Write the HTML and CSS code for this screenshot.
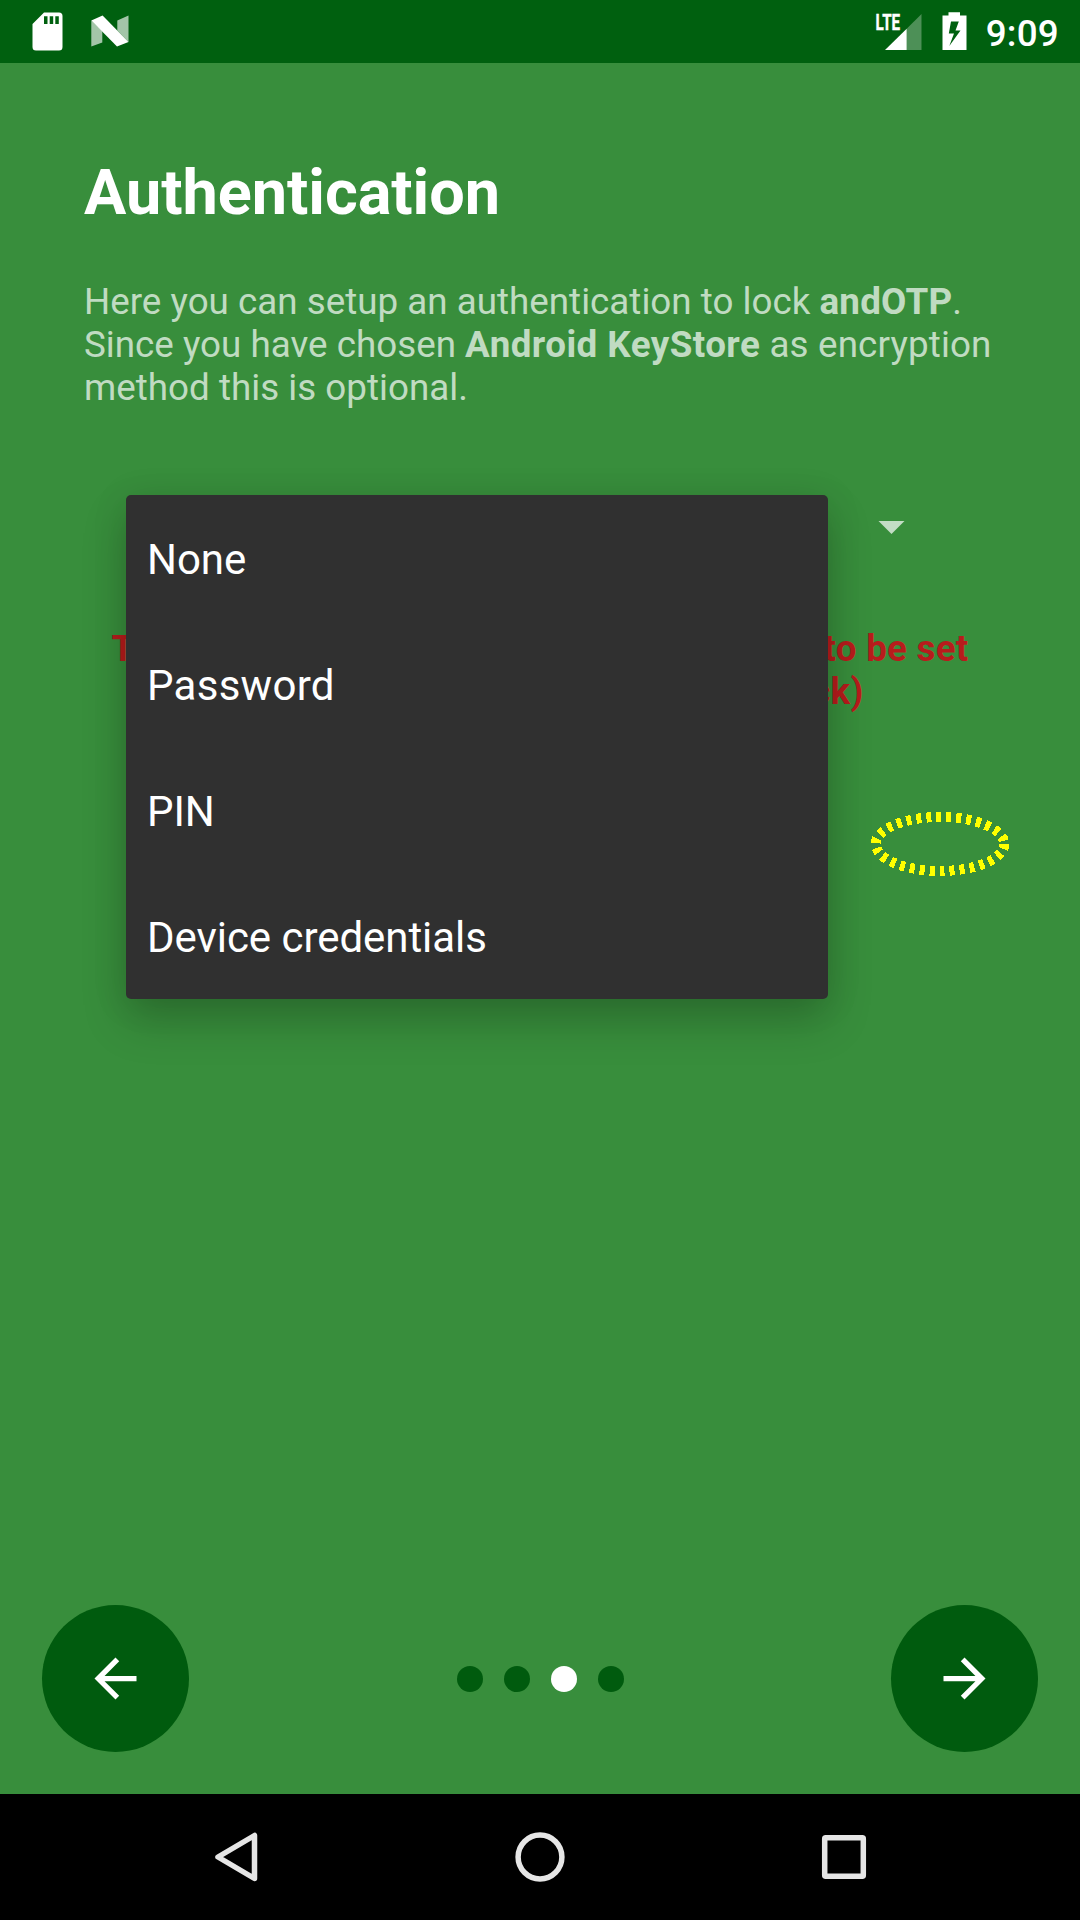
FILE: index.html
```html
<!DOCTYPE html>
<html lang="en">
<head>
<meta charset="utf-8">
<title>andOTP - Authentication</title>
<link rel="stylesheet" href="styles.css">
</head>
<body>
<header class="status-bar">
  <svg class="sd-icon" width="31" height="39" viewBox="0 0 31 39"><path fill="#fff" fill-rule="evenodd" d="M12 .5H27a3.500 3.500 0 0 1 3.500 3.500V35a3.500 3.500 0 0 1-3.500 3.500H4A3.500 3.500 0 0 1 .5 35V12ZM12 4.300v7.700h3.500V4.300ZM17.700 4.300v7.700h3.500V4.300ZM23.300 4.300v7.700h3.500V4.300Z"/></svg>
  <svg class="n-icon" width="38" height="32" viewBox="0 0 38 32"><path fill="#fff" fill-opacity=".64" d="M.3 5.500 11.300 16V27.500L.3 31.500ZM26.300 5.500 37.500.5V27L26.300 15.500Z"/><path fill="#fff" d="M.3 5.500 11.600.5 37.500 27 26 31.500Z"/></svg>
  <span class="spacer"></span>
  <svg class="signal-icon" width="47" height="40" viewBox="0 0 47 40"><path fill="#fff" fill-opacity=".3" d="M31.700 16.800 46.500 2V38H31.700Z"/><path fill="#fff" d="M10 38 31.700 16.800V38Z"/><text class="lte" x="0.600" y="17.500" textLength="24.500" lengthAdjust="spacingAndGlyphs">LTE</text></svg>
  <svg class="battery-icon" width="25" height="39" viewBox="0 0 25 39"><path fill="#fff" fill-rule="evenodd" d="M6.500 .3H18V3.500H24.500V38H.5V3.500H6.500ZM9 9.500 6.800 21.500H12L7.300 34 18.500 18.500H13.500L16.800 9.500Z"/></svg>
  <span class="clock">9:09</span>
</header>
<main class="slide">
  <h1 class="title">Authentication</h1>
  <p class="description">Here you can setup an authentication to lock <b>andOTP</b>.<br>Since you have chosen <b class="method">Android KeyStore</b><span class="line-end"> as encryption</span><br>method this is optional.</p>
  <div class="spinner">
    <svg class="caret" width="26" height="13" viewBox="0 0 26 13"><path fill="#fff" fill-opacity=".7" d="M.5 0H26.500L13.500 13Z"/></svg>
    <ul class="menu">
      <li class="option">None</li>
      <li class="option wide">Password</li>
      <li class="option">PIN</li>
      <li class="option">Device credentials</li>
    </ul>
  </div>
  <p class="warning">This feature requires a secure lock screen to be set<br>up (Settings -&gt; Security -&gt; Screenlock)</p>
  <svg class="highlight" width="140" height="66" viewBox="0 0 140 66"><ellipse cx="70" cy="33" rx="64.300" ry="27" fill="none" stroke="#ff0" stroke-width="10" stroke-dasharray="5 5" shape-rendering="crispEdges"/></svg>
  <footer class="controls">
    <button class="round" aria-label="Back"><svg width="63" height="63" viewBox="0 0 24 24"><path fill="#fff" d="M20 11H7.830l5.590-5.590L12 4l-8 8 8 8 1.410-1.410L7.830 13H20v-2z"/></svg></button>
    <div class="dots"><i class="dot"></i><i class="dot"></i><i class="dot active"></i><i class="dot"></i></div>
    <button class="round" aria-label="Next"><svg width="63" height="63" viewBox="0 0 24 24"><path fill="#fff" d="M12 4l-1.410 1.410L16.170 11H4v2h12.170l-5.580 5.590L12 20l8-8z"/></svg></button>
  </footer>
</main>
<nav class="nav-bar">
  <svg width="54" height="54" viewBox="0 0 54 54"><path d="M41.500 5.500V48.500L5 27Z"/></svg>
  <svg width="54" height="54" viewBox="0 0 54 54"><circle cx="27" cy="27" r="21.900"/></svg>
  <svg width="54" height="54" viewBox="0 0 54 54"><rect x="11.700" y="7.700" width="38.600" height="38.600" rx="1"/></svg>
</nav>
</body>
</html>
```
FILE: styles.css
```css
* { box-sizing: border-box; }

body {
  margin: 0;
  width: 1080px;
  height: 1920px;
  display: flex;
  flex-direction: column;
  overflow: hidden;
  background: #388e3c;
  color: #fff;
  font-family: Roboto, sans-serif;
}

svg { display: block; flex: none; overflow: visible; }

.status-bar {
  height: 63px;
  display: flex;
  align-items: flex-start;
  padding: 12px 21px 0 32px;
  background: #00600f;
}
.n-icon { margin: 3px 0 0 28px; }
.spacer { flex: 1; }
.signal-icon { margin-right: 20px; }
.lte {
  font-size: 22.500px;
  font-weight: 700;
  fill: #fff;
  stroke: #fff;
  stroke-width: .4;
}
.clock {
  margin: 0 0 0 19px;
  font-size: 36.750px;
  font-weight: 500;
  line-height: 43px;
  letter-spacing: .25px;
}

.slide {
  position: relative;
  flex: 1;
  display: flex;
  flex-direction: column;
  padding: 93px 42px 42px;
}
.title {
  margin: 0 42px;
  font-size: 63px;
  font-weight: 700;
  line-height: 74px;
  letter-spacing: -.04px;
}
.description {
  margin: 50px 42px 0;
  font-size: 36.750px;
  line-height: 43px;
  letter-spacing: .015px;
  color: rgba(255, 255, 255, .7);
  white-space: nowrap;
}
.description b { letter-spacing: .2px; }
.description .method { letter-spacing: .45px; }
.line-end { letter-spacing: .15px; }
.spinner {
  position: relative;
  height: 126px;
  margin: 54px 84px 0;
  padding: 58px 50px 0 0;
  display: flex;
  justify-content: flex-end;
}
.menu {
  position: absolute;
  z-index: 2;
  left: 0;
  top: 32px;
  width: 702px;
  margin: 0;
  padding: 0;
  list-style: none;
  background: #303030;
  border-radius: 5px;
  box-shadow: 0 22px 46px rgba(0, 0, 0, .2), 0 4px 36px rgba(0, 0, 0, .1);
}
.option {
  height: 126px;
  padding-left: 21px;
  font-size: 42px;
  line-height: 129px;
  letter-spacing: -.05px;
}
.option.wide { letter-spacing: .28px; }
.warning {
  margin: 38px 0 0;
  text-align: center;
  font-size: 36.750px;
  font-weight: 700;
  line-height: 43px;
  letter-spacing: .24px;
  color: #b71c1c;
  white-space: nowrap;
}
.highlight {
  position: absolute;
  left: 870px;
  top: 748px;
}
.controls {
  margin-top: auto;
  display: flex;
  align-items: center;
  justify-content: space-between;
}
.round {
  width: 147px;
  height: 147px;
  display: flex;
  align-items: center;
  justify-content: center;
  border: 0;
  padding: 0;
  border-radius: 50%;
  background: #005b0e;
}
.dots { display: flex; gap: 21px; }
.dot {
  width: 26px;
  height: 26px;
  border-radius: 50%;
  background: #005b0e;
}
.dot.active { background: #fff; }

.nav-bar {
  height: 126px;
  display: flex;
  justify-content: space-between;
  align-items: center;
  padding: 0 213px;
  background: #000;
}
.nav-bar svg {
  fill: none;
  stroke: #e6e6e6;
  stroke-width: 5.500;
  stroke-linejoin: round;
}
```
